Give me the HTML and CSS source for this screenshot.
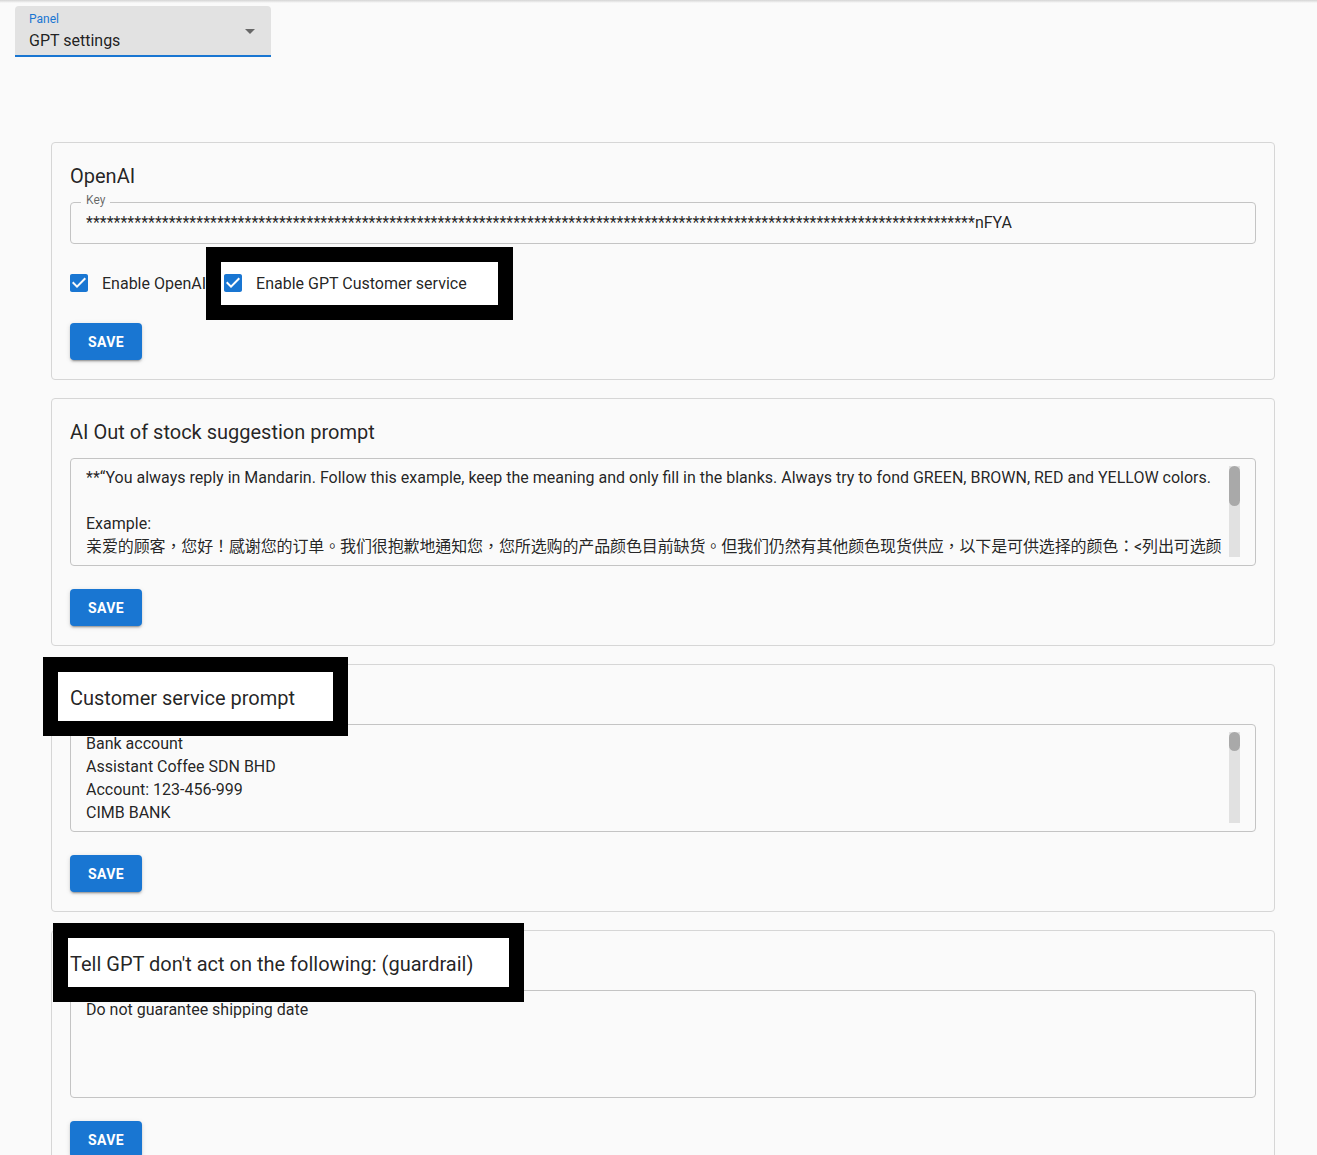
FILE: index.html
```html
<!DOCTYPE html>
<html lang="en">
<head>
  <meta charset="UTF-8">
  <meta name="viewport" content="width=device-width, initial-scale=1.0">
  <title>GPT settings</title>
  <link rel="stylesheet" href="styles.css">
</head>
<body>
  <div class="topbar-shadow"></div>

  <!-- Panel picker -->
  <div class="panel-select">
    <div class="select-text">
      <span class="select-label">Panel</span>
      <span class="select-value">GPT settings</span>
    </div>
    <svg class="select-arrow" viewBox="0 0 24 24"><path d="M7 10l5 5 5-5z"/></svg>
  </div>

  <div class="cards">

    <!-- OpenAI key -->
    <section class="card">
      <h2 class="card-title">OpenAI</h2>
      <div class="key-field">
        <span class="key-label">Key</span>
        <span class="key-value">*********************************************************************************************************************************nFYA</span>
      </div>
      <div class="check-row">
        <label class="check">
          <svg viewBox="0 0 24 24"><path d="M19 3H5c-1.11 0-2 .9-2 2v14c0 1.1.89 2 2 2h14c1.11 0 2-.9 2-2V5c0-1.1-.89-2-2-2zm-9 14l-5-5 1.41-1.41L10 14.17l7.59-7.59L19 8l-9 9z"/></svg>
          Enable OpenAI
        </label>
        <label class="check">
          <svg viewBox="0 0 24 24"><path d="M19 3H5c-1.11 0-2 .9-2 2v14c0 1.1.89 2 2 2h14c1.11 0 2-.9 2-2V5c0-1.1-.89-2-2-2zm-9 14l-5-5 1.41-1.41L10 14.17l7.59-7.59L19 8l-9 9z"/></svg>
          Enable GPT Customer service
        </label>
      </div>
      <button class="save-btn">SAVE</button>
      <div class="mark mark-enable"></div>
    </section>

    <!-- Out of stock prompt -->
    <section class="card">
      <h2 class="card-title">AI Out of stock suggestion prompt</h2>
      <div class="text-box">
        <div class="prompt-text" contenteditable="true" spellcheck="false">**“You always reply in Mandarin. Follow this example, keep the meaning and only fill in the blanks. Always try to fond GREEN, BROWN, RED and YELLOW colors.

Example:
<span class="cjk">亲爱的顾客，您好！感谢您的订单。我们很抱歉地通知您，您所选购的产品颜色目前缺货。但我们仍然有其他颜色现货供应，以下是可供选择的颜色：&lt;列出可选颜</span></div>
        <div class="scrollbar"><div class="scrollbar-thumb" style="height: 40px"></div></div>
      </div>
      <button class="save-btn">SAVE</button>
    </section>

    <!-- Customer service prompt -->
    <section class="card">
      <h2 class="card-title">Customer service prompt</h2>
      <div class="text-box">
        <div class="prompt-text" contenteditable="true" spellcheck="false">Bank account
Assistant Coffee SDN BHD
Account: 123-456-999
CIMB BANK</div>
        <div class="scrollbar"><div class="scrollbar-thumb" style="height: 19px"></div></div>
      </div>
      <button class="save-btn">SAVE</button>
      <div class="mark mark-cs"></div>
    </section>

    <!-- Guardrail -->
    <section class="card">
      <h2 class="card-title">Tell GPT don't act on the following: (guardrail)</h2>
      <div class="text-box">
        <div class="prompt-text" contenteditable="true" spellcheck="false">Do not guarantee shipping date</div>
      </div>
      <button class="save-btn">SAVE</button>
      <div class="mark mark-guard"></div>
    </section>

  </div>
</body>
</html>
```

FILE: styles.css
```css
/* Base */
body {
  margin: 0;
  background: #fafafa;
  font-family: Roboto, "Noto Sans CJK TC", sans-serif;
  color: rgba(0, 0, 0, 0.87);
}

.topbar-shadow {
  height: 3px;
  background: linear-gradient(#d4d4d4, #fafafa);
}

/* Panel select (filled) */
.panel-select {
  display: flex;
  align-items: flex-start;
  justify-content: space-between;
  box-sizing: border-box;
  width: 256px;
  height: 51px;
  margin: 3px 0 0 15px;
  padding: 6px 9px 0 14px;
  background: #e2e2e2;
  border-radius: 4px 4px 0 0;
  border-bottom: 2px solid #1976d2;
}

.select-text {
  display: flex;
  flex-direction: column;
  gap: 3px;
}

.select-label {
  font-size: 12px;
  line-height: 14px;
  color: #1976d2;
}

.select-value {
  font-size: 16px;
  line-height: 23px;
}

.select-arrow {
  width: 24px;
  height: 24px;
  margin-top: 7px;
  fill: rgba(0, 0, 0, 0.54);
}

/* Cards */
.cards {
  margin: 85px 42px 0 51px;
}

.card {
  position: relative;
  border: 1px solid #d6d6d6;
  border-radius: 4px;
  padding: 18px 18px 19px;
  margin-bottom: 18px;
}

.card-title {
  position: relative;
  z-index: 2;
  margin: -1px 0 10px;
  font-size: 20px;
  font-weight: 400;
  line-height: 32px;
}

/* Key input (outlined) */
.key-field {
  position: relative;
  display: flex;
  align-items: center;
  box-sizing: border-box;
  height: 42px;
  padding: 0 15px;
  border: 1px solid #c4c4c4;
  border-radius: 4px;
}

.key-label {
  position: absolute;
  left: 10px;
  top: -10px;
  padding: 0 5px;
  background: #fafafa;
  font-size: 12px;
  line-height: 14px;
  color: rgba(0, 0, 0, 0.6);
}

.key-value {
  font-size: 16px;
  line-height: 20px;
  white-space: nowrap;
  overflow: hidden;
}

/* Checkboxes */
.check-row {
  display: flex;
  align-items: center;
  height: 42px;
  margin: 18px 0 19px;
}

.check {
  position: relative;
  z-index: 2;
  display: flex;
  align-items: center;
  gap: 11px;
  margin-right: 18px;
  font-size: 16px;
}

.check svg {
  width: 24px;
  height: 24px;
  margin-left: -3px;
  fill: #1976d2;
}

/* Multiline text */
.text-box {
  display: flex;
  padding: 7px 15px;
  border: 1px solid #c4c4c4;
  border-radius: 4px;
  margin-bottom: 23px;
}

.prompt-text {
  flex: 1;
  height: 92px;
  overflow: hidden;
  outline: none;
  white-space: pre-wrap;
  font-size: 16px;
  line-height: 23px;
}

.prompt-text .cjk {
  letter-spacing: -0.12px;
}

.scrollbar {
  width: 11px;
  margin: 0 0 1px;
  background: #e1e1e1;
}

.scrollbar-thumb {
  background: #a9a9a9;
  border-radius: 6px;
}

/* Save button */
.save-btn {
  display: block;
  height: 37px;
  padding: 0 18px;
  border: none;
  border-radius: 4px;
  background: #1976d2;
  color: #fff;
  font-family: Roboto, sans-serif;
  font-size: 14px;
  font-weight: 700;
  letter-spacing: 0.4px;
  box-shadow: 0 3px 1px -2px rgba(0, 0, 0, 0.2), 0 2px 2px 0 rgba(0, 0, 0, 0.14), 0 1px 5px 0 rgba(0, 0, 0, 0.12);
  cursor: pointer;
}

/* Highlight frames */
.mark {
  position: absolute;
  z-index: 1;
  box-sizing: border-box;
  border: 15px solid #000;
  background: #fff;
}

.mark-enable {
  left: 154px;
  top: 104px;
  width: 307px;
  height: 73px;
}

.mark-cs {
  left: -9px;
  top: -8px;
  width: 305px;
  height: 79px;
}

.mark-guard {
  left: 1px;
  top: -8px;
  width: 471px;
  height: 79px;
}
```
